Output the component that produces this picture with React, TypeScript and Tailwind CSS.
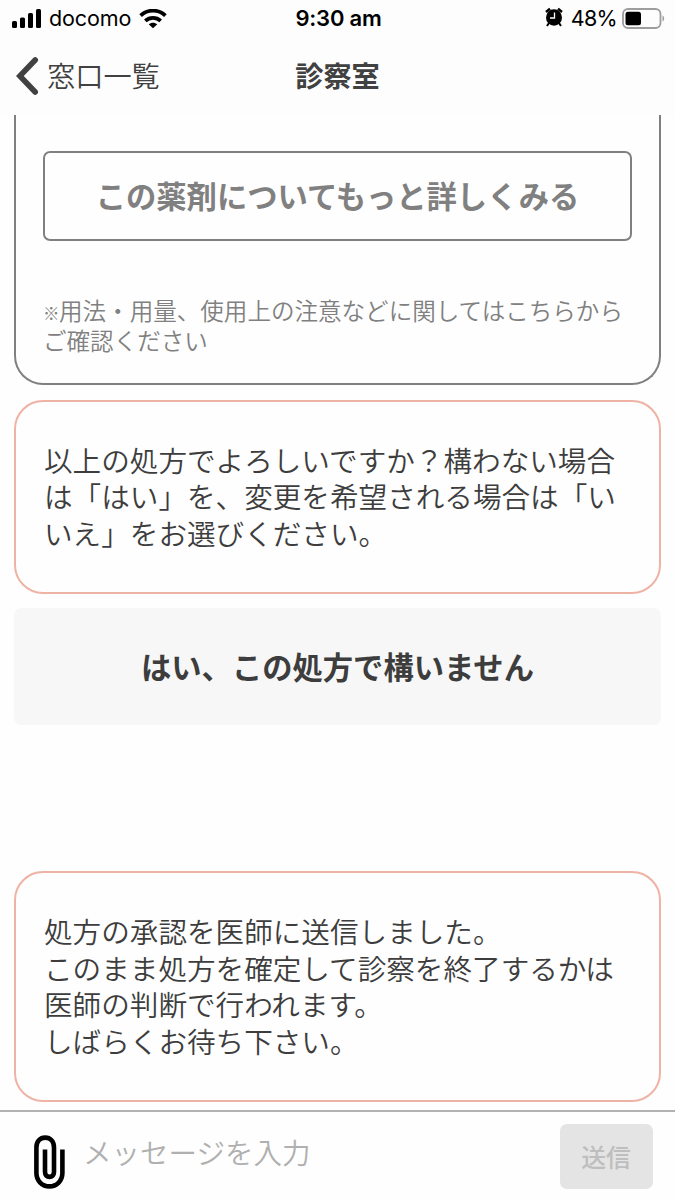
import type { ReactNode } from "react";

function StatusBar() {
  return (
    <div className="flex h-[37px] items-center pl-3 pr-[10px] text-black">
      <div className="flex flex-1 items-center">
        <svg className="h-5 w-[30px]" viewBox="0 0 30 20">
          <rect x="0" y="12" width="5" height="7" rx="1.5" />
          <rect x="8" y="8.5" width="5" height="10.5" rx="1.5" />
          <rect x="16" y="4" width="5" height="15" rx="1.5" />
          <rect x="24" y="0" width="5" height="19" rx="1.5" />
        </svg>
        <span className="ml-[7px] text-[21.5px] tracking-[-0.1px]">docomo</span>
        <svg className="ml-2 h-5 w-7" viewBox="0 0 28 20" fill="none" stroke="#000" strokeWidth="3.8">
          <path d="M1.6 6.6C8.6 0 19.4 0 26.4 6.6" />
          <path d="M6.3 11.9c4.4-4 11-4 15.4 0" />
          <path d="M14 19.2l4.3-3.9c-2.4-2.1-6.2-2.1-8.600 0z" fill="#000" stroke="none" />
        </svg>
      </div>
      <span className="text-[22px] font-semibold tracking-[-0.2px]">9:30 am</span>
      <div className="flex flex-1 items-center justify-end">
        <svg className="-mt-[3px] h-5 w-[18px]" viewBox="0 0 18 20">
          <ellipse cx="9" cy="10.500" rx="8" ry="8.300" />
          <path d="M1 5L5 1.800M17 5L13 1.800" stroke="#000" strokeWidth="2.500" />
          <path d="M4 16l-2 3M14 16l2 3" stroke="#000" strokeWidth="2" />
          <path d="M9.500 5.500v5.500H5" fill="none" stroke="#fff" strokeWidth="1.300" />
        </svg>
        <span className="ml-2 text-[21.500px] tracking-[-0.700px]">48%</span>
        <svg className="ml-[5px] h-[22px] w-[43px]" viewBox="0 0 43 22">
          <rect x="1" y="1" width="37.500" height="19" rx="5" fill="none" stroke="#9d9d9d" strokeWidth="1.800" />
          <rect x="3.500" y="3.800" width="15.500" height="13.500" rx="2.500" />
          <path d="M40.500 7.500c2.200 1 2.200 5 0 6z" fill="#9d9d9d" />
        </svg>
      </div>
    </div>
  );
}

function Header() {
  return (
    <header className="h-[115px] shrink-0 bg-[#fdfdfd] font-['Inter','Noto_Sans_CJK_JP',sans-serif]">
      <StatusBar />
      <div className="flex h-[77px] items-center px-4 text-[28.2px] text-[#414141]">
        <button className="flex flex-1 items-center font-['Noto_Sans_CJK_JP',sans-serif] font-[350]">
          <svg className="h-[38px] w-[23px]" viewBox="0 0 23 38" fill="none" stroke="#414141" strokeWidth="5.600" strokeLinecap="round" strokeLinejoin="miter">
            <path d="M19.200 3L3.800 19l15.400 16" />
          </svg>
          <span className="ml-2 leading-none">窓口一覧</span>
        </button>
        <h1 className="font-['Noto_Sans_CJK_JP',sans-serif] font-bold leading-none">診察室</h1>
        <div className="flex-1" />
      </div>
    </header>
  );
}

function Message({ children }: { children: ReactNode }) {
  return (
    <div className="rounded-[29px] border-2 border-[#efb3a5] px-7 pb-[41px] pt-10 text-[28.600px] font-[350] leading-[36.500px] text-[#3d3d3d]">
      {children}
    </div>
  );
}

export default function App() {
  return (
    <div lang="ja" className="flex h-[1200px] w-[675px] flex-col overflow-hidden bg-[#fefefe] font-['Noto_Sans_CJK_JP',sans-serif]">
      <Header />
      <main className="flex h-[995px] shrink-0 flex-col px-[14px]">
        <section className="h-[270px] rounded-b-[29px] border-2 border-t-0 border-[#808080] px-[27px] pt-9 text-[#808080]">
          <button className="flex h-[90px] w-full items-center justify-center rounded-[7px] border-2 border-[#808080] text-[30.300px] font-bold">
            この薬剤についてもっと詳しくみる
          </button>
          <p className="mt-[55px] whitespace-nowrap text-[23.550px] font-[350] leading-[29.500px]">
            <span className="inline-block w-4 text-[16.500px] font-bold leading-none">※</span>用法・用量、使用上の注意などに関してはこちらから
            <br />
            ご確認ください
          </p>
        </section>
        <div className="mt-[14.500px]">
          <Message>
            以上の処方でよろしいですか？構わない場合
            <br />
            は「はい」を、変更を希望される場合は「い
            <br />
            いえ」をお選びください。
          </Message>
        </div>
        <button className="mt-[14px] flex h-[117px] shrink-0 items-center justify-center rounded-[7px] bg-[#f7f7f7] text-[30.300px] font-bold text-[#3d3d3d]">
          はい、この処方で構いません
        </button>
        <div className="mt-[146px]">
          <Message>
            処方の承認を医師に送信しました。
            <br />
            このまま処方を確定して診察を終了するかは
            <br />
            医師の判断で行われます。
            <br />
            しばらくお待ち下さい。
          </Message>
        </div>
      </main>
      <footer className="flex h-[90px] shrink-0 items-start border-t-2 border-[#b2b2b2] pl-[34px] pr-[22px]">
        <svg className="mt-[23px] h-[54px] w-8" viewBox="0 0 32 54" fill="none" stroke="#000" strokeWidth="4.600">
          <path d="M28.400 14.500V38c0 7.600-5.600 13.400-13 13.400S2.400 45.600 2.400 38V12.500C2.400 6.500 6 2.600 11.200 2.600s8.800 3.900 8.800 9.900V37c0 3-1.900 4.900-4.500 4.900S11 40 11 37V14.500" />
        </svg>
        <span className="ml-[17px] mt-5 flex-1 text-[28.500px] font-[350] leading-[40px] text-[#b0b0b0]">
          メッセージを入力
        </span>
        <button className="mt-3 flex h-[65px] w-[93px] items-center justify-center rounded-[7px] bg-[#e4e4e4] pr-px text-[24.800px] font-medium text-[#bebebe]">
          送信
        </button>
      </footer>
    </div>
  );
}
